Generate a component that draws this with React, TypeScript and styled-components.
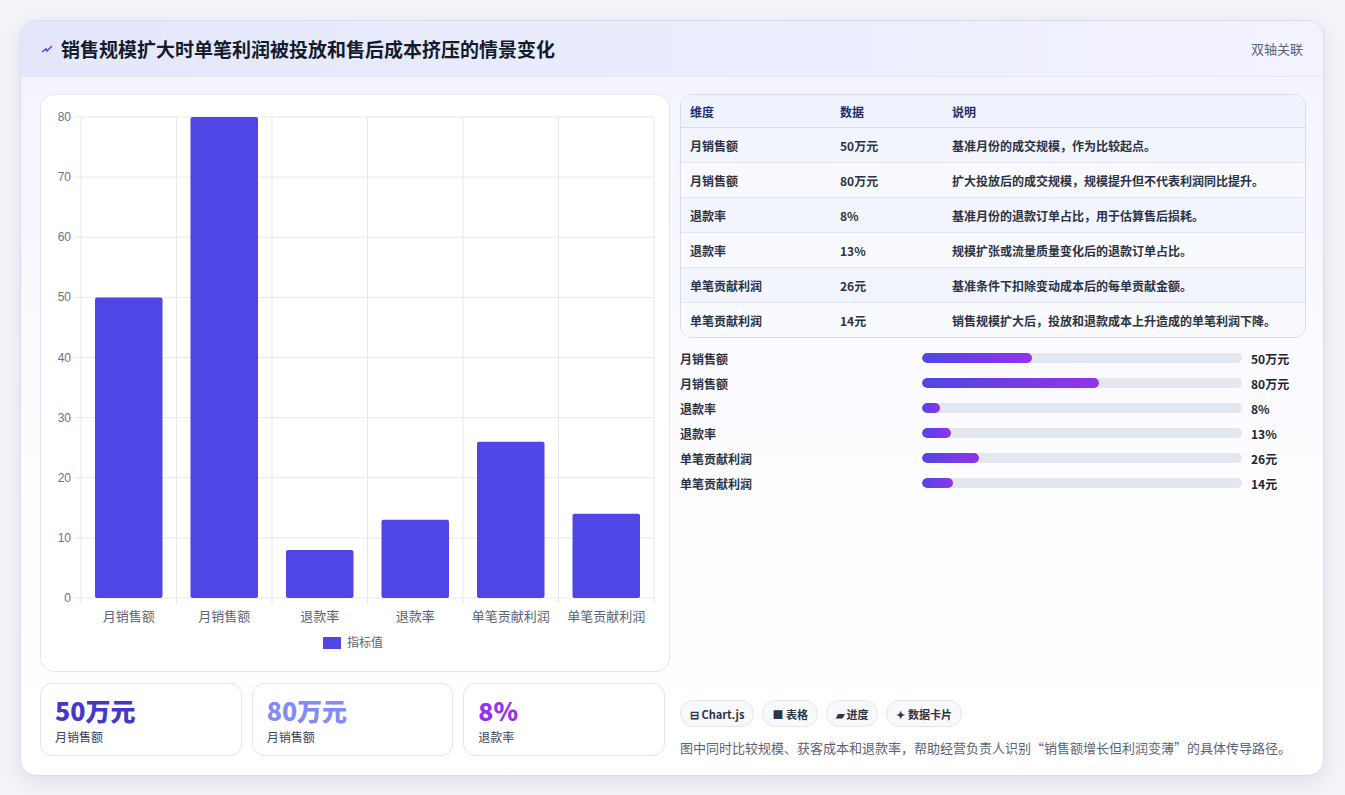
import React from 'react';
import styled, { createGlobalStyle } from 'styled-components';

const Global = createGlobalStyle`
  body { margin: 0; background: #f3f4f8; font-family: "Noto Sans CJK SC", "Noto Sans", sans-serif; }
`;

const Page = styled.div`
  width: 1345px; height: 795px; box-sizing: border-box; padding: 20px 21px 21px 20px;
`;

const Card = styled.div`
  height: 754px; border-radius: 16px; background: linear-gradient(180deg, #f2f3ff 0%, #fdfdff 60%, #ffffff 100%);
  border: 1px solid #d9dcf2; box-shadow: 0 6px 18px rgba(80, 80, 140, 0.12); overflow: hidden;
  display: flex; flex-direction: column;
`;

const Header = styled.div`
  height: 55px; flex-shrink: 0; display: flex; align-items: center; justify-content: space-between;
  padding: 0 20px 0 20px; background: linear-gradient(90deg, #e4e7fc 0%, #eceefd 60%, #f3f2fe 100%);
  border-bottom: 1px solid #e5e7f5;
`;

const Title = styled.h1`
  margin: 0; font-size: 19px; font-weight: 700; color: #141b2d; display: flex; align-items: center; gap: 8px;
`;

const Tag = styled.span`font-size: 13px; color: #5b6478;`;

const Body = styled.div`
  flex: 1; display: grid; grid-template-columns: 630px 1fr; gap: 10px; padding: 17px 18px 18px 19px;
`;

const Left = styled.div`display: flex; flex-direction: column; gap: 11px;`;
const Right = styled.div`display: flex; flex-direction: column;`;

const ChartCard = styled.div`
  height: 578px; box-sizing: border-box; background: #fff; border: 1px solid #e3e6ef; border-radius: 14px;
  position: relative;
`;

const Stats = styled.div`display: grid; grid-template-columns: repeat(3, 1fr); gap: 10px; padding-right: 5px;`;

const Stat = styled.div`
  height: 73px; box-sizing: border-box; border: 1px solid #e1e5f0; border-radius: 12px; background: #fff;
  padding: 10px 14px;
`;

const StatValue = styled.div<{ $c: string }>`font-size: 25px; font-weight: 800; color: ${p => p.$c}; line-height: 32px;`;
const StatLabel = styled.div`font-size: 12px; color: #3a4254; margin-top: 2px;`;

const Table = styled.table`
  width: 626px; border-collapse: separate; border-spacing: 0; border: 1px solid #d8dcea; border-radius: 12px;
  overflow: hidden; font-size: 12px; font-weight: 600; color: #2b3345;
`;

const Th = styled.th`
  text-align: left; height: 32px; padding: 0 9px; background: #eef3fe; color: #1e2f6b; font-weight: 700;
  border-bottom: 1px solid #d8dcea;
`;

const Tr = styled.tr<{ $alt: boolean }>`background: ${p => (p.$alt ? '#f9fafd' : '#f2f5fe')};`;

const Td = styled.td<{ $last: boolean }>`
  height: 34px; padding: 0 9px; border-bottom: ${p => (p.$last ? 'none' : '1px solid #e4e7f0')};
`;

const Bars = styled.div`display: flex; flex-direction: column; gap: 7px; margin-top: 11px;`;
const BarRow = styled.div`display: grid; grid-template-columns: 233px 320px 1fr; align-items: center; column-gap: 9px; height: 18px; font-size: 12px; font-weight: 600; color: #2b3345;`;
const Track = styled.div`height: 10px; background: #e3e7f0; border-radius: 5px; overflow: hidden;`;
const Fill = styled.div`height: 100%; border-radius: 5px; background: linear-gradient(90deg, #4f46e5, #9333ea);`;
const BarValue = styled.span`font-weight: 700; color: #1e2433;`;

const Spacer = styled.div`flex: 1;`;
const Chips = styled.div`display: flex; gap: 8px;`;
const Chip = styled.span`
  height: 27px; box-sizing: border-box; padding: 0 9px; display: inline-flex; align-items: center; gap: 4px;
  border: 1px solid #e1e5ee; border-radius: 14px; background: #f8f9fc; font-size: 11px; font-weight: 700; color: #2e3546;
`;
const Note = styled.p`margin: 11px 0 0; font-size: 13px; color: #5a6376;`;

const rows = [
  ['月销售额', '50万元', '基准月份的成交规模，作为比较起点。', 50],
  ['月销售额', '80万元', '扩大投放后的成交规模，规模提升但不代表利润同比提升。', 80],
  ['退款率', '8%', '基准月份的退款订单占比，用于估算售后损耗。', 8],
  ['退款率', '13%', '规模扩张或流量质量变化后的退款订单占比。', 13],
  ['单笔贡献利润', '26元', '基准条件下扣除变动成本后的每单贡献金额。', 26],
  ['单笔贡献利润', '14元', '销售规模扩大后，投放和退款成本上升造成的单笔利润下降。', 14],
] as const;

const Chart = () => {
  const x0 = 40, x1 = 613, y0 = 22, y1 = 503;
  const w = (x1 - x0) / 6;
  const yPx = (v: number) => y1 - (v / 80) * (y1 - y0);
  return (
    <svg width="628" height="576" style={{ display: 'block' }}>
      {[0, 10, 20, 30, 40, 50, 60, 70, 80].map(v => (
        <g key={v}>
          <line x1={x0 - 6} x2={x1} y1={yPx(v)} y2={yPx(v)} stroke="#e4e7ec" />
          <text x={x0 - 10} y={yPx(v) + 4} textAnchor="end" fontSize="12" fill="#6b7280" fontFamily="Liberation Sans, sans-serif">{v}</text>
        </g>
      ))}
      {Array.from({ length: 7 }).map((_, i) => (
        <line key={i} x1={x0 + i * w} x2={x0 + i * w} y1={y0} y2={y1 + 6} stroke="#e4e7ec" />
      ))}
      {rows.map((r, i) => (
        <g key={i}>
          <rect x={x0 + i * w + 14} y={yPx(r[3])} width={w - 28} height={y1 - yPx(r[3])} rx="2" fill="#4f46e5" />
          <text x={x0 + i * w + w / 2} y={y1 + 23} textAnchor="middle" fontSize="13" fill="#5b6374">{r[0]}</text>
        </g>
      ))}
      <rect x="282" y="542" width="18" height="12" fill="#4f46e5" />
      <text x="306" y="552" fontSize="12" fill="#5b6374">指标值</text>
    </svg>
  );
};

export default function App() {
  return (
    <Page>
      <Global />
      <Card>
        <Header>
          <Title>
            <svg width="12" height="12" viewBox="0 0 12 12"><path d="M1 9 L5 6 L6 8 L11 3" stroke="#4f46e5" strokeWidth="1.5" fill="none" /></svg>
            销售规模扩大时单笔利润被投放和售后成本挤压的情景变化
          </Title>
          <Tag>双轴关联</Tag>
        </Header>
        <Body>
          <Left>
            <ChartCard><Chart /></ChartCard>
            <Stats>
              <Stat><StatValue $c="#4338ca">50万元</StatValue><StatLabel>月销售额</StatLabel></Stat>
              <Stat><StatValue $c="#818cf8">80万元</StatValue><StatLabel>月销售额</StatLabel></Stat>
              <Stat><StatValue $c="#9333ea">8%</StatValue><StatLabel>退款率</StatLabel></Stat>
            </Stats>
          </Left>
          <Right>
            <Table>
              <thead>
                <tr><Th style={{ width: 132 }}>维度</Th><Th style={{ width: 94 }}>数据</Th><Th>说明</Th></tr>
              </thead>
              <tbody>
                {rows.map((r, i) => (
                  <Tr key={i} $alt={i % 2 === 1}>
                    <Td $last={i === 5}>{r[0]}</Td><Td $last={i === 5}>{r[1]}</Td><Td $last={i === 5}>{r[2]}</Td>
                  </Tr>
                ))}
              </tbody>
            </Table>
            <Bars>
              {rows.map((r, i) => (
                <BarRow key={i}>
                  <span>{r[0]}</span>
                  <Track><Fill style={{ width: `${(r[3] / 145) * 100}%` }} /></Track>
                  <BarValue>{r[1]}</BarValue>
                </BarRow>
              ))}
            </Bars>
            <Spacer />
            <Chips>
              <Chip>⊟ Chart.js</Chip>
              <Chip>■ 表格</Chip>
              <Chip>▰ 进度</Chip>
              <Chip>✦ 数据卡片</Chip>
            </Chips>
            <Note>图中同时比较规模、获客成本和退款率，帮助经营负责人识别“销售额增长但利润变薄”的具体传导路径。</Note>
          </Right>
        </Body>
      </Card>
    </Page>
  );
}
